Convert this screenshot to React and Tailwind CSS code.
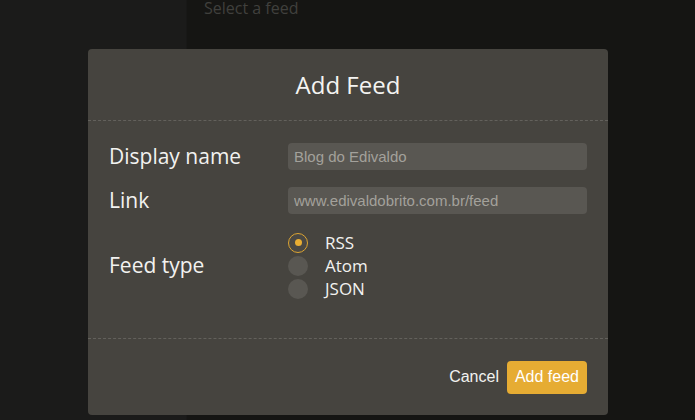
import React, { useState } from 'react';

const feedTypes = ['RSS', 'Atom', 'JSON'];

const Radio = ({ label, checked, onSelect }) => (
    <label className="flex items-center h-[23px] cursor-pointer" onClick={onSelect}>
        <span className={`flex items-center justify-center w-[20px] h-[20px] rounded-full ${checked ? 'border-[1.5px] border-[#dca432] bg-[#4a4843]' : 'bg-[#595752]'}`}>
            {checked && <span className="w-[7px] h-[7px] rounded-full bg-[#e8ad33]"></span>}
        </span>
        <span className="ml-[17px] text-[17px] text-[#f2f2f0] leading-none">{label}</span>
    </label>
);

export default function App() {
    const [feedType, setFeedType] = useState('RSS');

    return (
        <div className="relative w-[695px] h-[420px] overflow-hidden flex font-['Open_Sans',sans-serif]">
            <div className="w-[187px] h-full bg-[#1b1b1a] border-r border-[#181817]"></div>
            <div className="flex-1 h-full bg-[#151513] pl-[17px]">
                <div className="-mt-[4px] text-[16px] leading-[24px] text-[#40403d]">Select a feed</div>
            </div>

            <div className="absolute left-[88px] top-[49px] w-[520px] h-[366px] rounded-[4px] bg-[#46443f] flex flex-col">
                <div className="h-[72px] flex items-center justify-center border-b border-dashed border-[#63615c]">
                    <h2 className="text-[24px] text-[#f4f4f2] leading-none">Add Feed</h2>
                </div>

                <div className="flex-1 px-[21px] pt-[22px]">
                    <div className="flex items-center h-[27px]">
                        <label className="w-[179px] text-[21px] text-[#f2f2f0] leading-none">Display name</label>
                        <input
                            className="flex-1 h-[27px] rounded-[4px] bg-[#595752] px-[6px] text-[15px] text-[#eee] placeholder-[#a3a19b] outline-none font-['Liberation_Sans',sans-serif]"
                            placeholder="Blog do Edivaldo"
                        />
                    </div>
                    <div className="flex items-center h-[27px] mt-[17px]">
                        <label className="w-[179px] text-[21px] text-[#f2f2f0] leading-none">Link</label>
                        <input
                            className="flex-1 h-[27px] rounded-[4px] bg-[#595752] px-[6px] text-[15px] text-[#eee] placeholder-[#a3a19b] outline-none font-['Liberation_Sans',sans-serif]"
                            placeholder="www.edivaldobrito.com.br/feed"
                        />
                    </div>
                    <div className="flex items-center mt-[17px]">
                        <label className="w-[179px] text-[21px] text-[#f2f2f0] leading-none">Feed type</label>
                        <div className="flex flex-col">
                            {feedTypes.map((t) => (
                                <Radio key={t} label={t} checked={feedType === t} onSelect={() => setFeedType(t)} />
                            ))}
                        </div>
                    </div>
                </div>

                <div className="h-[77px] flex items-center justify-end px-[21px] border-t border-dashed border-[#63615c] font-['Liberation_Sans',sans-serif]">
                    <button className="text-[16px] text-[#f2f2f0] mr-[8px]">Cancel</button>
                    <button className="h-[33px] px-[8px] rounded-[4px] bg-[#e6ac33] text-[16px] text-white">Add feed</button>
                </div>
            </div>
        </div>
    );
}
